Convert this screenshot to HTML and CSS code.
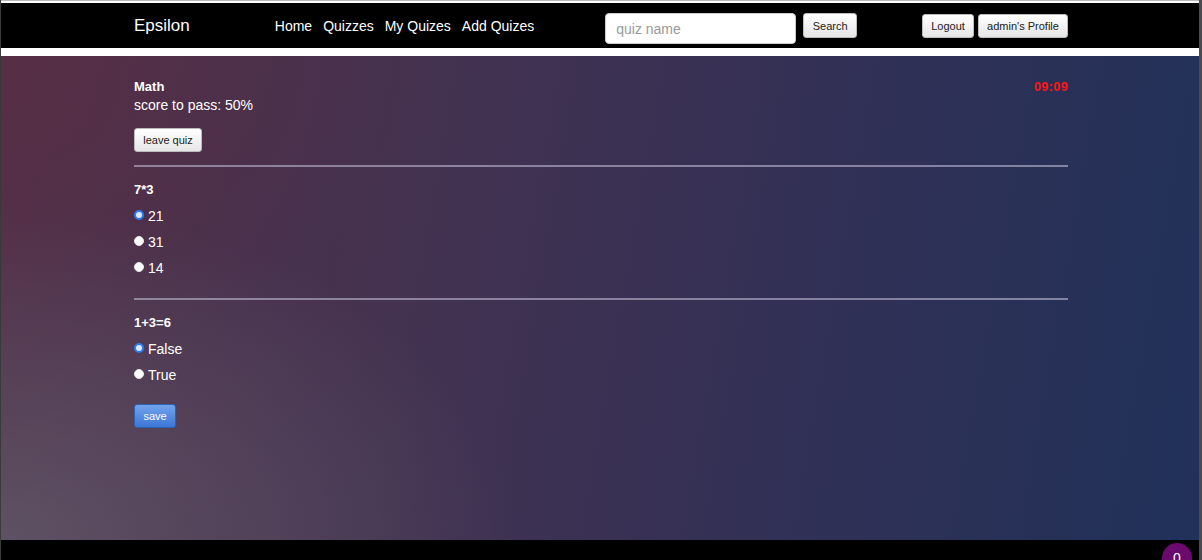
FILE: index.html
```html
<!DOCTYPE html>
<html>
<head>
<meta charset="utf-8">
<title>Epsilon</title>
<link rel="stylesheet" href="styles.css">
</head>
<body>
<div class="frame">
  <div class="topline"></div>
  <header class="navbar">
    <div class="container nav-inner">
      <a class="brand" href="#">Epsilon</a>
      <nav class="links">
        <a href="#">Home</a>
        <a href="#">Quizzes</a>
        <a href="#">My Quizes</a>
        <a href="#">Add Quizes</a>
      </nav>
      <form class="search">
        <input class="search-input" type="text" placeholder="quiz name">
        <button class="btn btn-search" type="button">Search</button>
      </form>
      <div class="user">
        <button class="btn btn-logout" type="button">Logout</button>
        <button class="btn btn-profile" type="button">admin's Profile</button>
      </div>
    </div>
  </header>
  <div class="whitebar"></div>
  <main class="page">
    <div class="container">
      <div class="quiz-head">
        <div class="quiz-info">
          <div class="quiz-title">Math</div>
          <div class="quiz-pass">score to pass: 50%</div>
          <button class="btn btn-leave" type="button">leave quiz</button>
        </div>
        <div class="timer">09:09</div>
      </div>
      <div class="question first">
        <div class="q-title">7*3</div>
        <label class="option"><input type="radio" name="q1" checked><span>21</span></label>
        <label class="option"><input type="radio" name="q1"><span>31</span></label>
        <label class="option"><input type="radio" name="q1"><span>14</span></label>
      </div>
      <div class="question second">
        <div class="q-title">1+3=6</div>
        <label class="option"><input type="radio" name="q2" checked><span>False</span></label>
        <label class="option"><input type="radio" name="q2"><span>True</span></label>
      </div>
      <button class="btn-save" type="button">save</button>
    </div>
  </main>
  <footer class="footer">
    <span class="badge">0</span>
  </footer>
</div>
</body>
</html>
```
FILE: styles.css
```css
* { box-sizing: border-box; }
html, body { margin: 0; padding: 0; height: 100%; overflow: hidden; }
body {
  font-family: "Liberation Sans", Arial, sans-serif;
  background: #fff;
}
.frame {
  width: 1202px;
  height: 560px;
  border-left: 1px solid #3a3a3a;
  border-right: 3px solid #4a4a50;
  display: flex;
  flex-direction: column;
  position: relative;
}
.container {
  width: 934px;
  margin: 0 auto;
  position: relative;
  left: 1px;
}
.topline {
  height: 3px;
  border-top: 1px solid #b8b8b8;
  background: #fff;
}
.navbar {
  height: 45px;
  background: #000;
}
.nav-inner {
  display: flex;
  align-items: flex-start;
  height: 100%;
}
.brand {
  color: #fff;
  font-size: 17px;
  text-decoration: none;
  margin-top: 13px;
  line-height: 20px;
}
.links {
  display: flex;
  gap: 11px;
  margin-left: 85px;
  margin-top: 14px;
}
.links a {
  color: #fff;
  text-decoration: none;
  font-size: 14px;
  line-height: 18px;
}
.search {
  display: flex;
  align-items: flex-start;
  margin-left: 71px;
  gap: 7px;
  margin-top: 10px;
}
.search-input {
  width: 191px;
  height: 31px;
  border: 1px solid #ccc;
  border-radius: 4px;
  padding: 0 10px;
  font-family: inherit;
  font-size: 14px;
  color: #333;
  background: #fff;
  outline: none;
}
.search-input::placeholder { color: #999; }
.btn {
  font-family: inherit;
  font-size: 11px;
  color: #222;
  height: 24px;
  padding: 0 9px;
  border: 1px solid #bbb;
  border-radius: 3px;
  background: linear-gradient(#ffffff, #e6e6e6);
  cursor: pointer;
}
.btn-search { height: 25px; width: 54px; padding: 0; }
.user {
  margin-left: auto;
  display: flex;
  gap: 4px;
  margin-top: 11px;
}
.user .btn { height: 24px; padding: 0; }
.btn-logout { width: 52px; }
.btn-profile { width: 90px; }
.whitebar { height: 8px; background: #fff; }
.page {
  height: 484px;
  padding-top: 23px;
  color: #fff;
  background:
    radial-gradient(ellipse 520px 330px at 0% 100%, rgba(100, 92, 108, 0.75) 0%, rgba(100, 92, 108, 0) 100%),
    radial-gradient(ellipse 420px 300px at 0% 0%, rgba(92, 44, 64, 0.5) 0%, rgba(92, 44, 64, 0) 100%),
    linear-gradient(100deg, #513049 0%, #433250 35%, #343055 62%, #203159 100%);
}
.quiz-head {
  display: flex;
  justify-content: space-between;
  align-items: flex-start;
}
.quiz-title {
  font-weight: bold;
  font-size: 13px;
  line-height: 16px;
}
.quiz-pass {
  font-size: 14px;
  line-height: 19px;
  margin-top: 1px;
}
.btn-leave {
  margin-top: 13px;
  height: 24px;
  width: 68px;
  padding: 0;
}
.timer {
  color: #ff1414;
  font-weight: bold;
  font-size: 12.5px;
  line-height: 16px;
  letter-spacing: 0.4px;
}
.question {
  border-top: 2px solid rgba(190, 185, 210, 0.6);
  margin-top: 13px;
  padding-top: 13px;
  padding-bottom: 6px;
}
.question.first { margin-top: 13px; }
.question.second { margin-top: 11px; }
.q-title {
  font-weight: bold;
  font-size: 13px;
  line-height: 20px;
  margin-bottom: 3px;
}
.option {
  display: flex;
  align-items: center;
  height: 26px;
  font-size: 14px;
}
.option input {
  appearance: none;
  -webkit-appearance: none;
  width: 10px;
  height: 10px;
  margin: 0 4px 0 0;
  border-radius: 50%;
  background: #fff;
  border: 1px solid #e8e8e8;
  position: relative;
  top: -1px;
}
.option input:checked {
  background: #dbe9ff;
  border: 2.5px solid #2a7cf0;
}
.btn-save {
  margin-top: 10px;
  width: 42px;
  height: 24px;
  padding: 0;
  font-family: inherit;
  font-size: 11px;
  color: #fff;
  border: 1px solid #2e62b3;
  border-radius: 3px;
  background: linear-gradient(#72a3ec, #3c77d6);
}
.footer {
  height: 20px;
  background: #000;
  position: relative;
}
.badge {
  position: absolute;
  left: 1161px;
  top: 3px;
  width: 30px;
  height: 30px;
  border-radius: 50%;
  background: #6a0a6c;
  color: #fff;
  font-size: 14px;
  text-align: center;
  line-height: 30px;
}
```
